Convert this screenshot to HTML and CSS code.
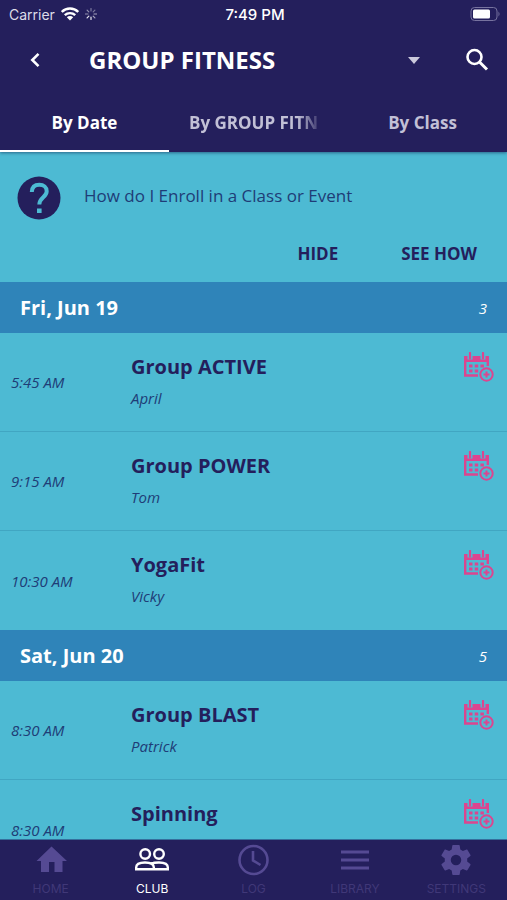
FILE: index.html
```html
<!DOCTYPE html>
<html lang="en">
<head>
<meta charset="utf-8">
<meta name="viewport" content="width=device-width, initial-scale=1">
<title>Group Fitness</title>
<link rel="stylesheet" href="styles.css">
</head>
<body>
<svg class="defs" aria-hidden="true">
  <symbol id="calendar-add" viewBox="0 0 30 30">
    <path d="M0 4h3.500v3.500h5V4h8v3.500h5V4H25v6H0z" fill="currentColor"/>
    <path d="M6 1v5.500M19 1v5.500" stroke="currentColor" stroke-width="2.200" stroke-linecap="round"/>
    <path d="M1.200 9v14.500H14M23.800 9v5" fill="none" stroke="currentColor" stroke-width="2.400"/>
    <path d="M5 12.500h3.500v3H5zm5.700 0h3.500v3h-3.500zm5.700 0h3.500v3h-3.500zM5 17.500h3.500v3H5zm5.700 0h3.500v3h-3.500z" fill="currentColor"/>
    <circle cx="22.500" cy="22.500" r="6.200" fill="none" stroke="currentColor" stroke-width="2"/>
    <path d="M22.500 19.500v6M19.500 22.500h6" stroke="currentColor" stroke-width="2"/>
  </symbol>
</svg>
<div class="app">
  <header class="header">
    <div class="status">
      <div class="status-left">
        <span>Carrier</span>
        <svg width="18" height="14" viewBox="0 0 18 14" aria-hidden="true">
          <path d="M.8 5a11.500 11.500 0 0 1 16.400 0M3.800 8.200a7.500 7.500 0 0 1 10.400 0" fill="none" stroke="#fff" stroke-width="2.400"/>
          <path d="M5.800 10.200a4.600 4.600 0 0 1 6.400 0L9 13.500z" fill="#fff"/>
        </svg>
        <svg width="12" height="12" viewBox="0 0 12 12" stroke="#fff" stroke-width="1.200" stroke-linecap="round" aria-hidden="true">
          <path d="M6 .5v2.500M9.900 2.100 8.200 3.800" opacity=".4"/>
          <path d="M11.500 6H9M9.900 9.900 8.200 8.200" opacity=".6"/>
          <path d="M6 11.500V9M2.100 9.900l1.700-1.700" opacity=".9"/>
          <path d="M.5 6H3M2.100 2.100l1.700 1.700" opacity=".5"/>
        </svg>
      </div>
      <span class="clock">7:49 PM</span>
      <div class="status-right">
        <svg width="31" height="14" viewBox="0 0 31 14" aria-hidden="true">
          <rect x="1" y=".5" width="26" height="13" rx="3.500" fill="none" stroke="#77739f"/>
          <rect x="3" y="2.500" width="17" height="9" rx="1.500" fill="#fff"/>
          <path d="M28.500 4.500q2 2.500 0 5z" fill="#77739f"/>
        </svg>
      </div>
    </div>
    <div class="titlebar">
      <button class="icon-btn back" type="button" aria-label="Back">
        <svg width="12" height="16" viewBox="0 0 12 16" aria-hidden="true"><path d="M9.500 1.800 3.300 8l6.200 6.200" fill="none" stroke="#fff" stroke-width="2.600"/></svg>
      </button>
      <div class="picker">
        <select class="picker-select" aria-label="Category">
          <option>GROUP FITNESS</option>
        </select>
        <svg class="picker-arrow" width="12" height="7" viewBox="0 0 12 7" aria-hidden="true"><path d="M0 0h12L6 7z" fill="#cbc9dc"/></svg>
      </div>
      <button class="icon-btn search" type="button" aria-label="Search">
        <svg width="24" height="24" viewBox="0 0 24 24" aria-hidden="true"><circle cx="9.500" cy="9" r="7" fill="none" stroke="#fff" stroke-width="2.600"/><path d="m14.500 14 7.500 7.500" stroke="#fff" stroke-width="3"/></svg>
      </button>
    </div>
    <nav class="tabs" aria-label="View">
      <button class="tab tab-active" type="button"><span>By Date</span></button>
      <button class="tab" type="button"><span class="fade">By GROUP FITNESS</span></button>
      <button class="tab" type="button"><span>By Class</span></button>
    </nav>
  </header>

  <main class="content">
    <section class="tip">
      <div class="tip-body">
        <svg width="44" height="44" viewBox="0 0 44 44" aria-hidden="true">
          <circle cx="22" cy="22" r="21.500" fill="#241f5c"/>
          <path d="M14.800 16C15 10.800 18 8.800 22.300 8.800c4.400 0 7.400 2.400 7.400 6.400 0 6-7.400 6.200-7.400 13.300" fill="none" stroke="#4dbad3" stroke-width="4"/>
          <path d="M20 32.500h4.600V37H20z" fill="#4dbad3"/>
        </svg>
        <p class="tip-text">How do I Enroll in a Class or Event</p>
      </div>
      <div class="tip-actions">
        <button class="text-btn" type="button">HIDE</button>
        <button class="text-btn" type="button">SEE HOW</button>
      </div>
    </section>

    <section>
      <header class="day"><h2>Fri, Jun 19</h2><span class="count">3</span></header>
      <ul class="classes">
        <li class="class"><time class="time">5:45 AM</time><div class="info"><h3>Group ACTIVE</h3><p>April</p></div><button class="add" type="button" aria-label="Add Group ACTIVE to calendar"><svg width="30" height="30"><use href="#calendar-add"/></svg></button></li>
        <li class="class"><time class="time">9:15 AM</time><div class="info"><h3>Group POWER</h3><p>Tom</p></div><button class="add" type="button" aria-label="Add Group POWER to calendar"><svg width="30" height="30"><use href="#calendar-add"/></svg></button></li>
        <li class="class"><time class="time">10:30 AM</time><div class="info"><h3>YogaFit</h3><p>Vicky</p></div><button class="add" type="button" aria-label="Add YogaFit to calendar"><svg width="30" height="30"><use href="#calendar-add"/></svg></button></li>
      </ul>
    </section>

    <section>
      <header class="day"><h2>Sat, Jun 20</h2><span class="count">5</span></header>
      <ul class="classes">
        <li class="class"><time class="time">8:30 AM</time><div class="info"><h3>Group BLAST</h3><p>Patrick</p></div><button class="add" type="button" aria-label="Add Group BLAST to calendar"><svg width="30" height="30"><use href="#calendar-add"/></svg></button></li>
        <li class="class"><time class="time">8:30 AM</time><div class="info"><h3>Spinning</h3></div><button class="add" type="button" aria-label="Add Spinning to calendar"><svg width="30" height="30"><use href="#calendar-add"/></svg></button></li>
      </ul>
    </section>
  </main>

  <nav class="bottom" aria-label="Main">
    <a class="nav-item" href="#home">
      <svg width="36" height="36" viewBox="0 0 36 36" aria-hidden="true"><path d="M18.500 4.500 34 19h-4.500v11H21.500V20h-5.500v10H8V19H3.500z" fill="currentColor"/></svg>
      <span>HOME</span>
    </a>
    <a class="nav-item nav-active" href="#club" aria-current="page">
      <svg width="36" height="36" viewBox="0 0 36 36" fill="none" stroke="currentColor" stroke-width="2.400" aria-hidden="true"><circle cx="11.200" cy="12" r="4.800"/><circle cx="25" cy="12" r="4.800"/><path d="M2.200 27.300v-2c0-3.300 4.200-4.800 8.800-4.800s8.800 1.500 8.800 4.800v2zM17 21.800c2-1 4.800-1.300 8-1.300 4.600 0 8.800 1.500 8.800 4.800v2h-14"/></svg>
      <span>CLUB</span>
    </a>
    <a class="nav-item" href="#log">
      <svg width="36" height="36" viewBox="0 0 36 36" fill="none" stroke="currentColor" stroke-width="2.600" aria-hidden="true"><circle cx="18.500" cy="18" r="14"/><path d="M18 9v9.500l7.500 4.500"/></svg>
      <span>LOG</span>
    </a>
    <a class="nav-item" href="#library">
      <svg width="36" height="36" viewBox="0 0 36 36" aria-hidden="true"><path d="M4 8.500h28v3H4zm0 8h28v3H4zm0 8h28v3H4z" fill="currentColor"/></svg>
      <span>LIBRARY</span>
    </a>
    <a class="nav-item" href="#settings">
      <svg width="36" height="36" viewBox="0 0 24 24" aria-hidden="true"><path fill="currentColor" d="M19.430 12.980c.04-.32.070-.64.070-.98s-.03-.66-.070-.98l2.110-1.650c.19-.15.240-.42.120-.64l-2-3.460c-.12-.22-.39-.3-.61-.22l-2.490 1c-.52-.4-1.080-.73-1.690-.98l-.38-2.650A.488.488 0 0 0 14 2h-4c-.25 0-.46.180-.49.420l-.38 2.650c-.61.250-1.170.59-1.690.98l-2.490-1c-.23-.09-.49 0-.61.220l-2 3.460c-.13.220-.07.490.12.640l2.110 1.650c-.04.320-.07.650-.07.980s.03.660.07.980l-2.110 1.650c-.19.150-.24.420-.12.640l2 3.460c.12.220.39.300.61.220l2.490-1c.52.400 1.080.73 1.690.98l.38 2.650c.03.240.24.420.49.420h4c.25 0 .46-.18.49-.42l.38-2.650c.61-.25 1.170-.59 1.690-.98l2.490 1c.23.090.49 0 .61-.22l2-3.460c.12-.22.070-.49-.12-.64zM12 15.500a3.500 3.500 0 1 1 0-7 3.500 3.500 0 0 1 0 7z"/></svg>
      <span>SETTINGS</span>
    </a>
  </nav>
</div>
</body>
</html>
```

FILE: styles.css
```css
:root {
  --navy: #241f5c;
  --teal: #4dbad3;
  --blue: #2f84b9;
  --ink: #1f3d77;
  --pink: #dc458f;
}

* {
  box-sizing: border-box;
}

body,
h2,
h3,
p,
ul {
  margin: 0;
  padding: 0;
}

body {
  font-family: "Open Sans", "Noto Sans", sans-serif;
  background: var(--teal);
}

button,
select {
  margin: 0;
  padding: 0;
  border: 0;
  background: none;
  color: inherit;
  font: inherit;
}

svg {
  display: block;
}

.defs {
  display: none;
}

.app {
  display: flex;
  flex-direction: column;
  height: 100vh;
}

.header {
  flex: none;
  background: var(--navy);
  color: #fff;
  box-shadow: 0 1px 3px rgba(20, 50, 90, 0.6);
  z-index: 1;
}

.status {
  display: grid;
  grid-template-columns: 1fr auto 1fr;
  align-items: center;
  height: 28px;
  padding: 0 6px 0 9px;
  font-family: Inter, "Liberation Sans", sans-serif;
  font-size: 14px;
}

.status-left {
  display: flex;
  align-items: center;
  gap: 6px;
  color: #dddce8;
}

.clock {
  font-size: 15px;
  font-weight: 500;
}

.status-right {
  display: flex;
  justify-content: flex-end;
}

.titlebar {
  display: flex;
  align-items: center;
  height: 64px;
  padding: 0 16px;
}

.icon-btn {
  display: flex;
  align-items: center;
  justify-content: center;
  width: 38px;
  height: 48px;
}

.search {
  width: 28px;
}

.picker {
  position: relative;
  flex: 1;
  margin: 0 40px 0 35px;
}

.picker-select {
  width: 100%;
  appearance: none;
  font-size: 24px;
  font-weight: 700;
  line-height: 40px;
}

.picker-arrow {
  position: absolute;
  right: 3px;
  top: 17px;
  pointer-events: none;
}

.tabs {
  display: grid;
  grid-template-columns: repeat(3, 1fr);
}

.tab {
  height: 60px;
  overflow: hidden;
  padding: 2px 20px 0;
  border-bottom: 2px solid transparent;
  color: #c2c0d6;
  font-size: 17px;
  font-weight: 700;
  white-space: nowrap;
}

.tab-active {
  color: #fff;
  border-bottom-color: #fff;
}

.fade {
  display: block;
  overflow: hidden;
  text-align: left;
  mask-image: linear-gradient(to right, #000 84%, rgba(0, 0, 0, 0.2));
}

.content {
  flex: 1;
  min-height: 0;
  overflow: hidden;
}

.tip {
  height: 130px;
  padding: 24px 17px 0;
}

.tip-body {
  display: flex;
  gap: 23px;
}

.tip-text {
  padding-top: 8px;
  color: var(--ink);
  font-size: 17px;
  line-height: 24px;
}

.tip-actions {
  display: flex;
  justify-content: flex-end;
  gap: 63px;
  margin-top: 22px;
  padding-right: 13px;
}

.text-btn {
  color: var(--navy);
  font-size: 17px;
  font-weight: 700;
  line-height: 24px;
}

.day {
  display: flex;
  align-items: center;
  justify-content: space-between;
  height: 51px;
  padding: 0 20px;
  background: var(--blue);
  color: #fff;
}

.day h2 {
  font-size: 20px;
  font-weight: 700;
}

.count {
  font-size: 15px;
  font-style: italic;
}

.classes {
  list-style: none;
}

.class {
  display: flex;
  height: 99px;
  padding: 0 13px 0 11px;
  border-bottom: 1px solid #41a6c2;
}

.class:last-child {
  border-bottom: 0;
}

.time {
  align-self: center;
  width: 120px;
  color: var(--ink);
  font-size: 15px;
  font-style: italic;
}

.info {
  flex: 1;
  padding-top: 20px;
}

.info h3 {
  color: var(--navy);
  font-size: 20px;
  font-weight: 700;
  line-height: 28px;
}

.info p {
  padding-top: 7px;
  color: var(--ink);
  font-size: 15px;
  font-style: italic;
  line-height: 20px;
}

.add {
  align-self: flex-start;
  margin-top: 19px;
  color: var(--pink);
}

.bottom {
  display: grid;
  flex: none;
  grid-template-columns: repeat(5, 1fr);
  height: 61px;
  border-top: 1px solid #356f9c;
  background: var(--navy);
}

.nav-item {
  display: flex;
  flex-direction: column;
  align-items: center;
  padding-top: 2px;
  color: #554a93;
  font-family: Inter, "Liberation Sans", sans-serif;
  font-size: 12px;
  line-height: 20px;
  text-decoration: none;
}

.nav-item span {
  padding-top: 1px;
  color: #403878;
}

.nav-item.nav-active,
.nav-active span {
  color: #fff;
}
```
